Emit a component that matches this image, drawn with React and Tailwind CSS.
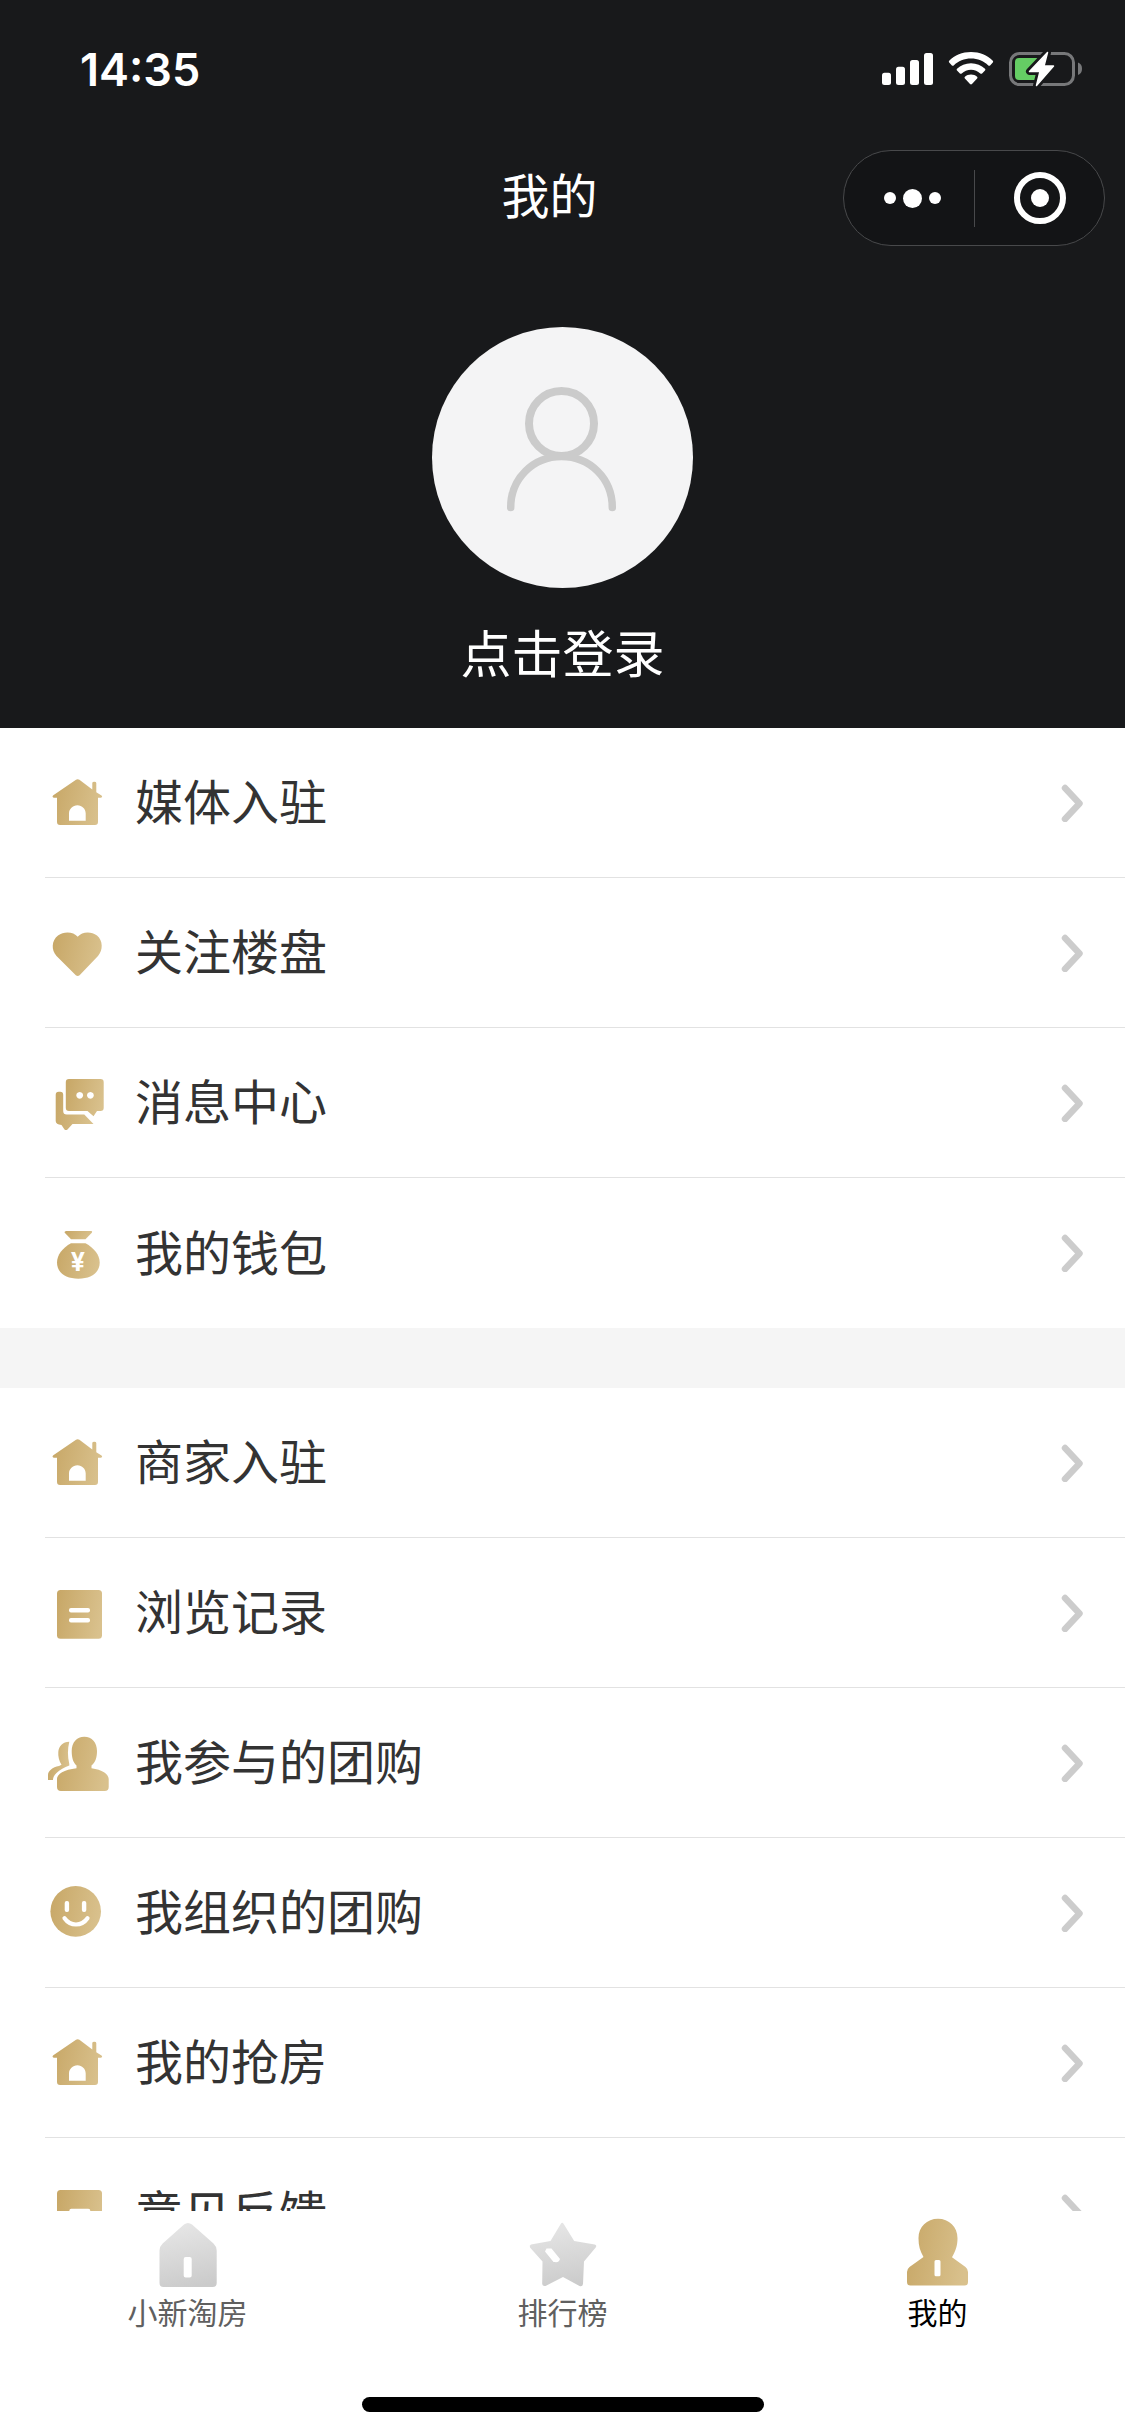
const GOLD = 'url(#gold)';

const HouseIcon = () => (
  <path
    fillRule="evenodd"
    d="M31 6.8q1.700-1.300 3.400 0L47.300 16.500V10q0-1.300 2-1.300t2 1.300v9.300l5.200 3.200q1.500 1.500-.5 2.300H53V49q0 3-3 3H15q-3 0-3-3V24.800H8.800q-2.200-.8-.5-2.500zM24 47.700h16.700v-7.200c0-4.600-3.700-8.200-8.300-8.200S24 36 24 40.500z"
  />
);

const HeartIcon = () => (
  <path d="M32.700 13.800C28.500 8.500 19 8 13 12.500 6.500 17.500 6 27 11.500 33L30.800 52.300q1.900 1.600 3.800 0L53 33C58.300 27 58 17.500 52 12.500 46 8 37 8.500 32.700 13.800z" />
);

const MessageIcon = () => (
  <>
    <path
      fillRule="evenodd"
      d="M24 6h31.500q3.200 0 3.200 3.200v25.600q0 3.200-3.200 3.200H52l-3.500 5.200L42.500 38H24q-3.200 0-3.200-3.200V9.200Q20.800 6 24 6zm10.700 12.900a3.400 3.400 0 1 0 .01 0zm10.700 0a3.400 3.400 0 1 0 .01 0z"
    />
    <path d="M13.700 18.700h1.600q2.900 0 2.900 3V38q0 3.500 3.500 3.500h17.600L48.500 51H27.500l-5 5.500q-1.500 1-3 0L16.500 52q-5.800-.5-5.800-4V21.700q0-3 3-3z" />
  </>
);

const WalletIcon = () => (
  <>
    <path d="M21 8h25.500q1.200.6.300 1.800L40.500 16.300H26L19.700 9.800Q19 8.600 21 8z" />
    <path d="M26 20.300h14.500C49 25 54.700 32 54.700 39.500c0 10-8.500 16.200-21.300 16.200S12 49.500 12 39.500C12 32 17.500 25 26 20.300z" />
    <text
      x="33"
      y="47.700"
      textAnchor="middle"
      fill="#fff"
      className="font-['Inter'] text-[25px] font-bold"
    >
      ¥
    </text>
  </>
);

const NoteIcon = () => (
  <>
    <rect x="12" y="7" width="45" height="48.700" rx="3.500" />
    <rect x="24" y="25" width="21" height="4.500" rx="2" fill="#fff" />
    <rect x="24" y="35" width="21" height="4.500" rx="2" fill="#fff" />
  </>
);

const PeopleIcon = () => (
  <>
    <path d="M39.300 3.700C47 3.700 52 9.500 52 18c0 6-1.500 11.500-5.500 14.500v2.700C57 36.500 63.700 41 63.700 46v8q0 4-4 4H16q-4 0-4-4v-8c0-5 7-9.500 19.500-10.800v-2.700C28 29.500 26.700 24 26.700 18c0-8.500 5-14.300 12.600-14.300z" />
    <path d="M24.300 8.700C22.500 16 22.500 23 24.300 31v1.500c-5 1.500-9.500 4.500-12.800 7.500-2.500 2.500-3.500 4.500-3.500 7H3v-5c0-4 4.500-8 11-9l2.500-1.200C14 28 13 23 13.300 19c.4-6 4.500-10.300 11-10.300z" />
  </>
);

const SmileIcon = () => (
  <>
    <circle cx="30.700" cy="28.400" r="25.300" />
    <rect x="19.700" y="18" width="4.400" height="11" rx="2" fill="#fff" />
    <rect x="36.900" y="18" width="4.400" height="11" rx="2" fill="#fff" />
    <path
      d="M19.500 35.200q4.500 6.300 11.500 6.300t11.500-6.300"
      fill="none"
      stroke="#fff"
      strokeWidth="4.200"
      strokeLinecap="round"
    />
  </>
);

const FeedbackIcon = () => (
  <>
    <rect x="12" y="7" width="45" height="48.700" rx="3.500" />
    <rect x="24.300" y="25.700" width="21" height="14" rx="2" fill="#fff" />
  </>
);

const mediaMenu = [
  { label: '媒体入驻', Icon: HouseIcon },
  { label: '关注楼盘', Icon: HeartIcon },
  { label: '消息中心', Icon: MessageIcon },
  { label: '我的钱包', Icon: WalletIcon },
];

const merchantMenu = [
  { label: '商家入驻', Icon: HouseIcon },
  { label: '浏览记录', Icon: NoteIcon },
  { label: '我参与的团购', Icon: PeopleIcon },
  { label: '我组织的团购', Icon: SmileIcon },
  { label: '我的抢房', Icon: HouseIcon },
  { label: '意见反馈', Icon: FeedbackIcon },
];

const StatusBar = () => (
  <div className="flex h-[138px] items-center justify-between pr-[43px] pl-[80px]">
    <span className="font-['Inter'] text-[45px] leading-none font-semibold">14:35</span>
    <div className="flex items-center">
      {/* Signal */}
      <svg className="h-[34px] w-[52px]" viewBox="0 0 52 34" fill="#fff">
        <rect x="0" y="20.700" width="9" height="12.300" rx="2.500" />
        <rect x="14" y="14.700" width="9" height="18.300" rx="2.500" />
        <rect x="28" y="8" width="9" height="25" rx="2.500" />
        <rect x="42" y="1" width="9" height="32" rx="2.500" />
      </svg>
      {/* Wifi */}
      <svg className="ml-[14px] h-[34px] w-[46px]" viewBox="0 0 46 34" fill="#fff">
        <path d="M23 0C14.300 0 6.700 3.300 1.200 8.800q-.8.900 0 1.800l2.700 2.800q.9.800 1.800 0C10.300 9 16.300 6.500 23 6.500s12.700 2.500 17.300 6.900q.9.800 1.800 0l2.700-2.800q.8-.9 0-1.800C39.300 3.300 31.700 0 23 0z" />
        <path d="M23 11.200c-5.600 0-10.300 2.100-14 5.500q-.9.900 0 1.800l2.900 3q.9.700 1.800 0c2.500-2.300 5.700-3.700 9.300-3.700s6.800 1.400 9.300 3.700q.9.700 1.800 0l2.900-3q.9-.9 0-1.800c-3.700-3.400-8.400-5.500-14-5.500z" />
        <path d="M23 22.500c-2.400 0-4.500.9-6.100 2.200q-.9.900 0 1.800l5.100 5.600q1 .9 2 0l5.100-5.600q.9-.9 0-1.800c-1.600-1.300-3.700-2.200-6.100-2.200z" />
      </svg>
      {/* Battery */}
      <svg className="ml-[15px] h-[38px] w-[73px]" viewBox="0 0 73 38">
        <rect x="1.500" y="3.500" width="63" height="31" rx="9" fill="none" stroke="#77787a" strokeWidth="3" />
        <path d="M69 12.500q4 1.500 4 6.200t-4 6.300z" fill="#77787a" />
        <rect x="6" y="8" width="25" height="22" rx="4" fill="#65cd64" />
        <path
          d="M38.500 2.500 20.500 21.500H31L27.500 35.500 44.500 16H35z"
          fill="#fff"
          stroke="#18191b"
          strokeWidth="7"
          strokeLinejoin="round"
        />
        <path
          d="M38.500 2.500 20.500 21.500H31L27.500 35.500 44.500 16H35z"
          fill="#fff"
          stroke="#fff"
          strokeWidth="1.500"
          strokeLinejoin="round"
        />
      </svg>
    </div>
  </div>
);

const NavBar = () => (
  <div className="grid h-[120px] grid-cols-[1fr_96px_1fr] items-center pr-[20px]">
    <span />
    <h1 className="-translate-x-[3px] pb-[10px] text-center text-5xl leading-none font-normal whitespace-nowrap">
      我的
    </h1>
    {/* Mini program capsule */}
    <div className="flex h-24 w-[262px] items-center justify-self-end rounded-full border border-[#48494b] bg-[#131416]">
      <button className="flex w-[130px] items-center justify-center gap-[7px] pl-[7px]">
        <i className="size-3 rounded-full bg-white" />
        <i className="size-[19px] rounded-full bg-white" />
        <i className="size-3 rounded-full bg-white" />
      </button>
      <span className="h-[57px] w-px bg-[#48494b]" />
      <button className="flex flex-1 items-center justify-center">
        <span className="flex size-[52px] items-center justify-center rounded-full border-[6px] border-white">
          <i className="size-[18px] rounded-full bg-white" />
        </span>
      </button>
    </div>
  </div>
);

const Profile = () => (
  <div className="flex flex-col items-center pt-[69px]">
    <svg className="size-[261px] rounded-full bg-[#f4f4f5]" viewBox="0 0 261 261" fill="none" stroke="#cbcbcb">
      <circle cx="129.500" cy="96.500" r="32.500" strokeWidth="8" />
      <path d="M78.700 180.500c0-29 22.500-51 50.800-51s50.800 22 50.800 51" strokeWidth="7.500" strokeLinecap="round" />
    </svg>
    <p className="mt-[38px] text-[51px] leading-[51px]">点击登录</p>
  </div>
);

const MenuRow = ({ label, Icon, last }) => (
  <li className="flex h-[150px] pl-[45px]">
    <div className={`flex flex-1 items-center pr-[40px] ${last ? '' : 'border-b border-[#e2e2e2]'}`}>
      <svg className="h-[60px] w-[66px]" viewBox="0 0 66 60" fill={GOLD}>
        <Icon />
      </svg>
      <span className="ml-6 flex-1 pb-[7px] text-5xl leading-none">{label}</span>
      <svg
        className="h-[38px] w-[24px]"
        viewBox="0 0 24 38"
        fill="none"
        stroke="#cccccc"
        strokeWidth="6.500"
        strokeLinecap="round"
        strokeLinejoin="round"
      >
        <path d="M4 4 18.500 19.500 4 35" />
      </svg>
    </div>
  </li>
);

const TabBar = () => (
  <nav className="grid h-[130px] shrink-0 grid-cols-3 bg-white text-[30px] leading-[30px] text-[#606060]">
    <a className="flex flex-col items-center">
      <svg className="h-[85px] w-[72px]" viewBox="0 0 72 85" fill="url(#silver)">
        <path
          fillRule="evenodd"
          d="M32 13.500q4-3 8 0L61.500 32.500q3.200 3 3.200 7V72q0 4-4 4H11.500q-4 0-4-4V39.500q0-4 3.200-7zM31.700 48q0-2 2-2h4q2 0 2 2v16.500q0 2-2 2h-4q-2 0-2-2z"
        />
      </svg>
      <span>小新淘房</span>
    </a>
    <a className="flex flex-col items-center">
      <svg className="h-[85px] w-[72px]" viewBox="0 0 72 85" fill="url(#silver)">
        <path d="M33.700 13q1.500-2.500 3 0l10.500 17 20.500 3.500q2.500 1 1 3L57 50.500l-1 22.500q-.5 3-3.500 2L36 66 18.500 75q-3 .5-3.300-2L15.500 50.500 3 36.500q-1-2 1-3L23.500 30z" />
        <path d="M19.500 37.500h5l8.500 10.500q-1.500 4-5 3h-1.500L18 40.500z" fill="#fff" />
      </svg>
      <span>排行榜</span>
    </a>
    <a className="flex flex-col items-center text-black">
      <svg className="h-[85px] w-[72px]" viewBox="0 0 72 85" fill={GOLD}>
        <path
          fillRule="evenodd"
          d="M36 7.700c11 0 19.500 8 19.500 19.500 0 7.500-2 13-5.500 19L63.500 56Q66 58 66 61v10q0 3.500-3.500 3.500h-54Q5 74.500 5 71V61q0-3 2.500-5L21.500 46c-3.500-6-5-11.500-5-18.800C16.500 15.700 25 7.700 36 7.700zM32.500 50.500q0-1.500 1.500-1.500h3q1.500 0 1.500 1.500v13.300q0 1.500-1.500 1.500h-3q-1.500 0-1.500-1.500z"
        />
      </svg>
      <span>我的</span>
    </a>
  </nav>
);

const App = () => {
  return (
    <div className="flex h-[2436px] w-[1125px] flex-col overflow-hidden bg-white font-['Noto_Sans_CJK_SC',sans-serif] text-[#333]">
      {/* Shared gradients */}
      <svg className="absolute size-0">
        <defs>
          <linearGradient id="gold" x1="0" y1="0.300" x2="1" y2="0.500">
            <stop offset="0" stopColor="#c8a868" />
            <stop offset="1" stopColor="#d9c18d" />
          </linearGradient>
          <linearGradient id="silver" x1="0.400" y1="0" x2="0.600" y2="1">
            <stop offset="0" stopColor="#e6e6e6" />
            <stop offset="1" stopColor="#cbcbcb" />
          </linearGradient>
        </defs>
      </svg>

      <header className="h-[728px] shrink-0 bg-[#18191b] text-white">
        <StatusBar />
        <NavBar />
        <Profile />
      </header>

      <main className="h-[1483px] shrink-0 overflow-hidden">
        <ul>
          {mediaMenu.map((item, index) => (
            <MenuRow key={item.label} {...item} last={index === mediaMenu.length - 1} />
          ))}
        </ul>
        <div className="h-[60px] bg-[#f5f5f5]" />
        <ul>
          {merchantMenu.map((item, index) => (
            <MenuRow key={item.label} {...item} last={index === merchantMenu.length - 1} />
          ))}
        </ul>
      </main>

      <TabBar />

      {/* Home indicator */}
      <div className="mx-auto mt-[56px] h-[15px] w-[402px] shrink-0 rounded-full bg-black" />
    </div>
  );
};

export default App;
